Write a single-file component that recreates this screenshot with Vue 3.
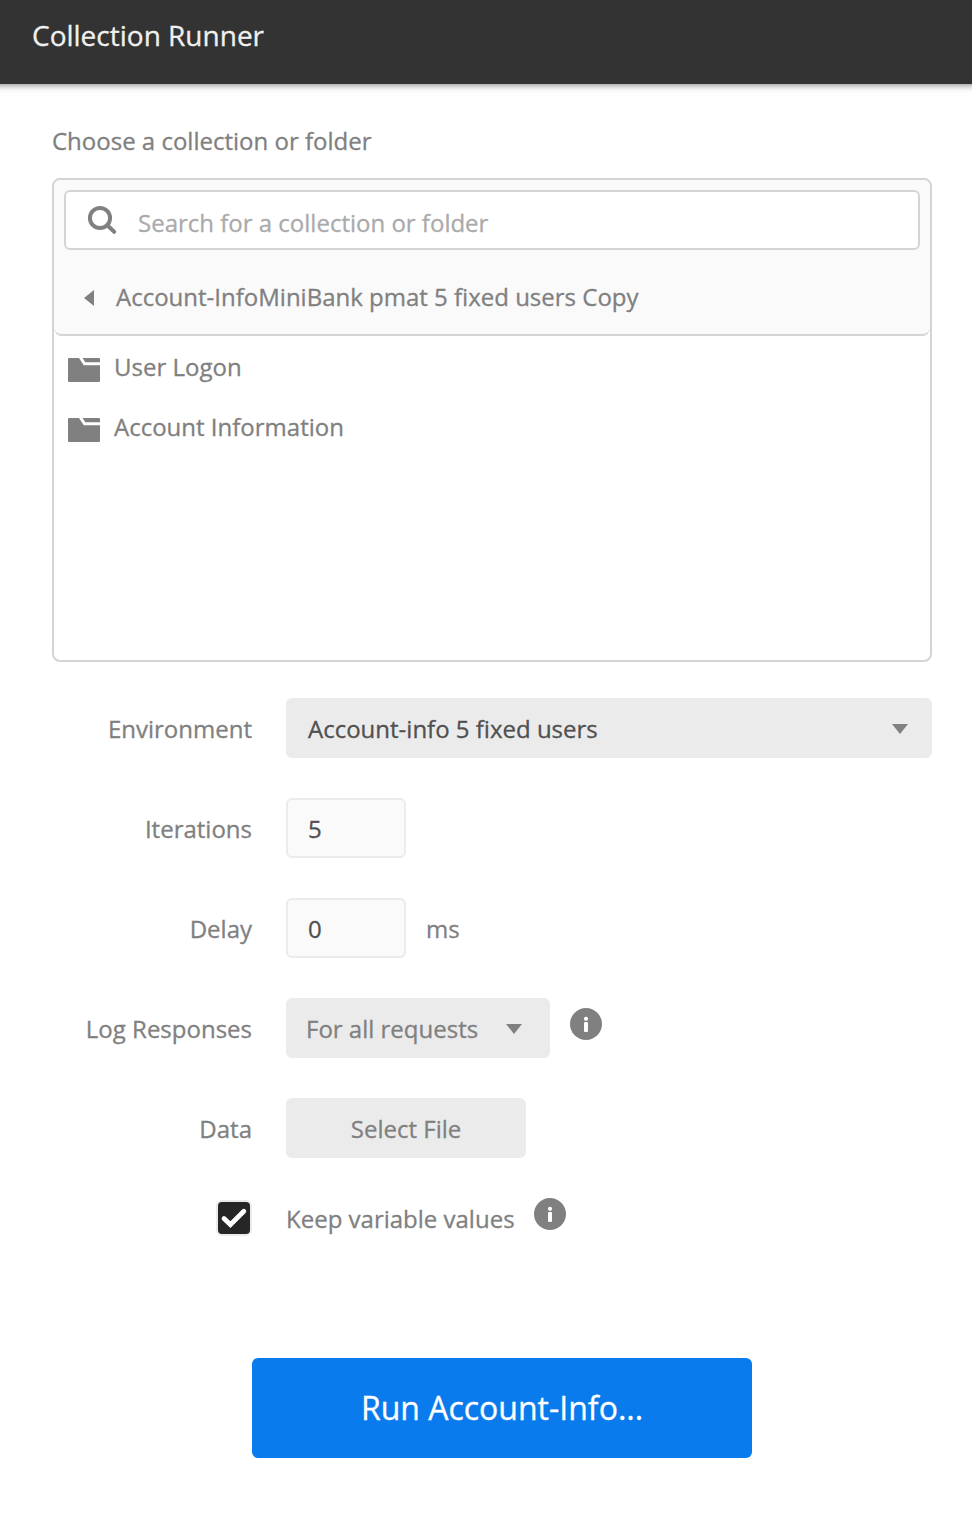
<script setup>
import { ref } from 'vue'

const search = ref('')
const iterations = ref('5')
const delay = ref('0')
const keepValues = ref(true)
const folders = ['User Logon', 'Account Information']
</script>

<template>
  <div class="runner">
    <header class="header">Collection Runner</header>

    <main class="content">
      <div class="title">Choose a collection or folder</div>

      <section class="picker">
        <div class="picker-head">
          <label class="search">
            <svg class="search-icon" width="32" height="32" viewBox="0 0 32 32">
              <circle cx="14" cy="14" r="10.1" fill="none" stroke="#808080" stroke-width="4" />
              <path d="M21 21L28.2 27.8" stroke="#808080" stroke-width="4" stroke-linecap="round" />
            </svg>
            <input v-model="search" class="search-input" type="text" placeholder="Search for a collection or folder" />
          </label>
          <div class="crumb">
            <svg class="back" width="10" height="16" viewBox="0 0 10 16"><path d="M10 0V16L0 8Z" fill="#808080" /></svg>
            <span>Account-InfoMiniBank pmat 5 fixed users Copy</span>
          </div>
        </div>
        <ul class="folders">
          <li v-for="name in folders" :key="name" class="folder">
            <svg class="folder-icon" width="32" height="24" viewBox="0 0 32 24" fill="#808080">
              <path d="M1 0H11L15.8 7.2H32V23Q32 24 31 24H1Q0 24 0 23V1Q0 0 1 0Z" />
              <path d="M14.5 0H31Q32 0 32 1V4.3H17.3Z" />
            </svg>
            <span>{{ name }}</span>
          </li>
        </ul>
      </section>

      <form class="form" @submit.prevent>
        <div class="row">
          <span class="label">Environment</span>
          <button type="button" class="gray env">
            <span>Account-info 5 fixed users</span>
            <svg width="16" height="10" viewBox="0 0 16 10"><path d="M0 0H16L8 10Z" fill="#808080" /></svg>
          </button>
        </div>
        <div class="row">
          <span class="label">Iterations</span>
          <input v-model="iterations" class="number" type="text" />
        </div>
        <div class="row">
          <span class="label">Delay</span>
          <input v-model="delay" class="number" type="text" />
          <span class="unit">ms</span>
        </div>
        <div class="row">
          <span class="label">Log Responses</span>
          <button type="button" class="gray log">
            <span>For all requests</span>
            <svg width="16" height="10" viewBox="0 0 16 10"><path d="M0 0H16L8 10Z" fill="#808080" /></svg>
          </button>
          <svg class="info" width="32" height="32" viewBox="0 0 32 32">
            <circle cx="16" cy="16" r="16" fill="#808080" />
            <circle cx="16" cy="10.8" r="2.1" fill="#fff" />
            <rect x="14" y="14" width="4" height="10" rx="1" fill="#fff" />
          </svg>
        </div>
        <div class="row">
          <span class="label">Data</span>
          <button type="button" class="gray file">Select File</button>
        </div>
        <div class="row keep">
          <div class="label">
            <button type="button" class="check" @click="keepValues = !keepValues">
              <svg v-if="keepValues" width="32" height="32" viewBox="0 0 32 32">
                <path d="M6 16.6L12.4 22.6L25.8 9.2" fill="none" stroke="#fff" stroke-width="4.8" stroke-linecap="round" />
              </svg>
            </button>
          </div>
          <span class="keep-text">Keep variable values</span>
          <svg class="info" width="32" height="32" viewBox="0 0 32 32">
            <circle cx="16" cy="16" r="16" fill="#808080" />
            <circle cx="16" cy="10.8" r="2.1" fill="#fff" />
            <rect x="14" y="14" width="4" height="10" rx="1" fill="#fff" />
          </svg>
        </div>
        <button type="submit" class="run">Run Account-Info...</button>
      </form>
    </main>
  </div>
</template>

<style>
body {
  margin: 0;
  background: #fff;
}
</style>

<style scoped>
.runner,
.runner * {
  box-sizing: border-box;
}
.runner {
  height: 1538px;
  overflow: hidden;
  font-family: 'Open Sans', 'Noto Sans', sans-serif;
  font-size: 24px;
  color: #808080;
  -webkit-text-stroke: 0.3px;
}
svg {
  display: block;
  flex: none;
}
button,
input {
  font: inherit;
  color: inherit;
  border: 0;
  margin: 0;
  padding: 0;
  outline: 0;
}
.header {
  height: 84px;
  margin: 0 -10px;
  padding: 0 42px 14px;
  line-height: 70px;
  font-size: 28px;
  color: #f0f0f0;
  background: #333;
  box-shadow: 0 0 8px rgba(0, 0, 0, 0.6);
}
.content {
  padding: 41px 40px 0 52px;
}
.title {
  line-height: 32px;
  margin-bottom: 21px;
}
.picker {
  height: 484px;
  border: 2px solid #d4d4d4;
  border-radius: 8px;
}
.picker-head {
  height: 156px;
  padding: 10px;
  background: #fafafa;
  border-bottom: 2px solid #d4d4d4;
  border-radius: 6px 6px 8px 8px;
}
.search {
  display: flex;
  height: 60px;
  padding-left: 20px;
  background: #fff;
  border: 2px solid #d4d4d4;
  border-radius: 6px;
}
.search-icon {
  margin-top: 12px;
}
.search-input {
  flex: 1;
  height: 56px;
  padding: 5px 0 0 20px;
  background: none;
}
.search-input::placeholder {
  color: #aaa;
  opacity: 1;
}
.crumb {
  display: flex;
  align-items: center;
  gap: 22px;
  height: 74px;
  margin-top: 10px;
  padding-left: 20px;
  line-height: 74px;
}
.back {
  margin-top: 2px;
}
.folders {
  list-style: none;
  margin: 0;
  padding: 1px 14px;
}
.folder {
  display: flex;
  gap: 14px;
  height: 60px;
  line-height: 60px;
}
.folder-icon {
  margin-top: 21px;
}
.form {
  display: flex;
  flex-direction: column;
  gap: 40px;
  padding-top: 36px;
}
.row {
  display: flex;
  height: 60px;
  line-height: 62px;
}
.label {
  width: 200px;
  margin-right: 34px;
  text-align: right;
}
.gray {
  display: flex;
  align-items: center;
  justify-content: space-between;
  padding-top: 2px;
  line-height: 58px;
  background: #ebebeb;
  border-radius: 6px;
}
.env {
  flex: 1;
  padding-left: 22px;
  padding-right: 24px;
  color: #505050;
}
.number {
  width: 120px;
  height: 60px;
  padding: 2px 20px 0;
  color: #505050;
  background: #fafafa;
  border: 2px solid #ebebeb;
  border-radius: 6px;
}
.unit {
  margin-left: 20px;
}
.log {
  width: 264px;
  padding-left: 20px;
  padding-right: 28px;
}
.info {
  margin: 10px 0 0 20px;
}
.file {
  width: 240px;
  justify-content: center;
}
.keep {
  height: 40px;
  padding-top: 2px;
  line-height: 42px;
}
.keep .label {
  display: flex;
  justify-content: flex-end;
}
.check {
  width: 36px;
  height: 36px;
  background: #262626;
  border: 2px solid #ebebeb;
  border-radius: 6px;
}
.keep-text {
  margin-top: -2px;
}
.keep .info {
  margin: -2px 0 0 19px;
}
.run {
  width: 500px;
  height: 100px;
  margin: 80px 0 0 200px;
  padding-bottom: 2px;
  font-size: 32px;
  color: #fff;
  background: #097bed;
  border-radius: 6px;
}
</style>
